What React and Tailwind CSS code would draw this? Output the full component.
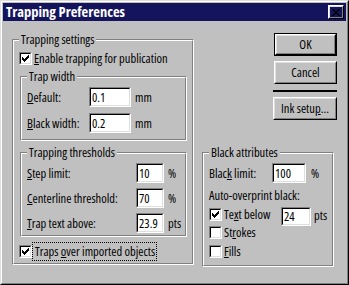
import React from "react";

const FONT = "font-['Open_Sans',Arial,sans-serif] font-stretch-condensed";

function CheckMark() {
  return (
    <svg width="7" height="7" viewBox="0 0 7 7" shapeRendering="crispEdges">
      <path
        d="M6 0h1v1H6zM5 1h2v1H5zM0 2h1v1H0zM4 2h3v1H4zM0 3h2v1H0zM3 3h3v1H3zM0 4h5v1H0zM1 5h3v1H1zM2 6h1v1H2z"
        fill="#000"
      />
    </svg>
  );
}

function Check({ checked }) {
  return (
    <span className="block w-[13px] h-[13px] shrink-0 border border-t-[#808080] border-l-[#808080] border-b-white border-r-white">
      <span className="flex w-full h-full items-center justify-center bg-white border border-t-black border-l-black border-b-[#dfdfdf] border-r-[#dfdfdf]">
        {checked && <CheckMark />}
      </span>
    </span>
  );
}

function Field({ value, className }) {
  return (
    <div className={`shrink-0 border border-t-[#808080] border-l-[#808080] border-b-white border-r-white ${className}`}>
      <div className="flex h-full items-center bg-white pl-[1px] border border-t-black border-l-black border-b-[#dfdfdf] border-r-[#dfdfdf] leading-[15px]">
        <span>{value}</span>
      </div>
    </div>
  );
}

function Group({ label, className, children }) {
  return (
    <div className={`relative shrink-0 border border-t-[#808080] border-l-[#808080] border-b-white border-r-white ${className}`}>
      <div className="h-full border border-t-white border-l-white border-b-[#808080] border-r-[#808080]">
        {children}
      </div>
      <span className="absolute left-[6px] -top-[8px] px-[2px] bg-[#c0c0c0] leading-[15px] whitespace-nowrap">
        {label}
      </span>
    </div>
  );
}

function Button({ children, isDefault, className }) {
  const inner = (
    <div className="h-full border border-t-white border-l-white border-b-black border-r-black">
      <div className="flex h-full items-center justify-center border border-t-[#dfdfdf] border-l-[#dfdfdf] border-b-[#808080] border-r-[#808080] leading-[15px]">
        {children}
      </div>
    </div>
  );
  if (isDefault) {
    return <div className={`border border-black ${className}`}>{inner}</div>;
  }
  return <div className={className}>{inner}</div>;
}

function CloseGlyph() {
  return (
    <svg width="8" height="7" viewBox="0 0 8 7" shapeRendering="crispEdges">
      <path
        d="M0 0h2v1H0zM6 0h2v1H6zM1 1h2v1H1zM5 1h2v1H5zM2 2h4v1H2zM3 3h2v1H3zM2 4h4v1H2zM1 5h2v1H1zM5 5h2v1H5zM0 6h2v1H0zM6 6h2v1H6z"
        fill="#000"
      />
    </svg>
  );
}

export default function App() {
  return (
    <div className={`w-[349px] h-[285px] bg-[#c0c0c0] text-black text-[12.5px] ${FONT} border border-t-[#dfdfdf] border-l-[#dfdfdf] border-b-black border-r-black`}>
      <div className="h-full p-px border border-t-white border-l-white border-b-[#808080] border-r-[#808080] flex flex-col">
        {/* Title bar */}
        <div className="h-[18px] shrink-0 flex items-center bg-[#14145c] pl-[3px] pr-[2px]">
          <span className="text-white font-bold text-[14.5px] leading-[16px]">Trapping Preferences</span>
          <div className="ml-auto w-[16px] h-[14px] border border-t-white border-l-white border-b-black border-r-black">
            <div className="flex h-full items-center justify-center border border-t-[#dfdfdf] border-l-[#dfdfdf] border-b-[#808080] border-r-[#808080]">
              <CloseGlyph />
            </div>
          </div>
        </div>

        {/* Content */}
        <div className="flex pl-[9px]">
          {/* Left group */}
          <Group label="Trapping settings" className="mt-[18px] w-[182px] h-[226px]">
            <div className="pl-[5px] pt-[11px] flex items-center h-[24px] gap-[2px]">
              <Check checked />
              <span className="leading-[15px] whitespace-nowrap">
                <u>E</u>nable trapping for publication
              </span>
            </div>

            <div className="pl-[6px] mt-[11px]">
              <Group label="Trap width" className="w-[167px] h-[65px]">
                <div className="pt-[9px] pl-[5px] flex flex-col gap-[6px]">
                  <div className="flex items-center h-[20px]">
                    <span className="w-[62px] leading-[15px]"><u>D</u>efault:</span>
                    <Field value="0.1" className="w-[42px] h-[20px]" />
                    <span className="ml-[4px] leading-[15px]">mm</span>
                  </div>
                  <div className="flex items-center h-[20px]">
                    <span className="w-[62px] leading-[15px] whitespace-nowrap"><u>B</u>lack width:</span>
                    <Field value="0.2" className="w-[42px] h-[20px]" />
                    <span className="ml-[4px] leading-[15px]">mm</span>
                  </div>
                </div>
              </Group>
            </div>

            <div className="pl-[6px] mt-[11px]">
              <Group label="Trapping thresholds" className="w-[167px] h-[85px]">
                <div className="pt-[9px] pl-[5px] flex flex-col gap-[5px]">
                  <div className="flex items-center h-[20px]">
                    <span className="w-[109px] leading-[15px]"><u>S</u>tep limit:</span>
                    <Field value="10" className="w-[28px] h-[20px]" />
                    <span className="ml-[4px] leading-[15px]">%</span>
                  </div>
                  <div className="flex items-center h-[20px]">
                    <span className="w-[109px] leading-[15px] whitespace-nowrap"><u>C</u>enterline threshold:</span>
                    <Field value="70" className="w-[28px] h-[20px]" />
                    <span className="ml-[4px] leading-[15px]">%</span>
                  </div>
                  <div className="flex items-center h-[20px]">
                    <span className="w-[109px] leading-[15px] whitespace-nowrap"><u>T</u>rap text above:</span>
                    <Field value="23.9" className="w-[28px] h-[20px]" />
                    <span className="ml-[4px] leading-[15px]">pts</span>
                  </div>
                </div>
              </Group>
            </div>

            <div className="pl-[5px] mt-[8px] flex items-center h-[13px]">
              <Check checked />
              <span className="h-[19px] flex items-center border border-dotted border-black pl-[2px] pr-[1px] leading-[15px] whitespace-nowrap">
                <span>Traps <u>o</u>ver imported objects</span>
              </span>
            </div>
          </Group>

          {/* Right column */}
          <div className="ml-[8px] mt-[12px] w-[135px] flex flex-col">
            <Button isDefault className="self-end w-[63px] h-[23px]">OK</Button>
            <Button className="self-end mt-[5px] w-[63px] h-[23px]">Cancel</Button>
            <div className="self-end mt-[6px] w-[64px] h-[2px] bg-black" />
            <Button className="self-end mt-[5px] w-[64px] h-[23px]">
              <span className="whitespace-nowrap">Ink setu<u>p</u>...</span>
            </Button>

            <Group label="Black attributes" className="mt-[32px] w-[132px] h-[115px]">
              <div className="pt-[9px] pl-[5px] flex flex-col">
                <div className="flex items-center h-[20px]">
                  <span className="w-[63px] leading-[15px] whitespace-nowrap">Blac<u>k</u> limit:</span>
                  <Field value="100" className="w-[34px] h-[20px]" />
                  <span className="ml-[5px] leading-[15px]">%</span>
                </div>
                <div className="mt-[5px] leading-[15px] whitespace-nowrap">Auto-overprint black:</div>
                <div className="mt-[4px] flex items-start h-[19px]">
                  <div className="mt-[1px]"><Check checked /></div>
                  <span className="ml-[2px] w-[57px] leading-[15px] whitespace-nowrap">Te<u>x</u>t below</span>
                  <Field value="24" className="w-[30px] h-[19px]" />
                  <span className="ml-[3px] mt-[1px] leading-[15px]">pts</span>
                </div>
                <div className="flex items-center h-[13px] gap-[2px]">
                  <Check />
                  <span className="leading-[15px]">St<u>r</u>okes</span>
                </div>
                <div className="mt-[6px] flex items-center h-[13px] gap-[2px]">
                  <Check />
                  <span className="leading-[15px]"><u>F</u>ills</span>
                </div>
              </div>
            </Group>
          </div>
        </div>
      </div>
    </div>
  );
}
